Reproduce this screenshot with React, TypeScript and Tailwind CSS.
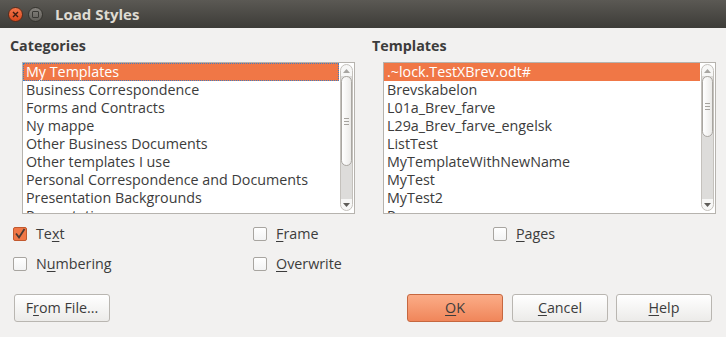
import React from 'react';

const categories = [
  'My Templates',
  'Business Correspondence',
  'Forms and Contracts',
  'Ny mappe',
  'Other Business Documents',
  'Other templates I use',
  'Personal Correspondence and Documents',
  'Presentation Backgrounds',
  'Presentations',
];

const templates = [
  '.~lock.TestXBrev.odt#',
  'Brevskabelon',
  'L01a_Brev_farve',
  'L29a_Brev_farve_engelsk',
  'ListTest',
  'MyTemplateWithNewName',
  'MyTest',
  'MyTest2',
  'Pages',
];

function ScrollBar({ thumb }: { thumb: string }) {
  return (
    <div className="absolute right-[1px] top-[1px] bottom-[2px] w-[13px] rounded-full border border-[#c4c1bc] bg-[#f7f7f6] flex flex-col items-center overflow-hidden">
      <div className="h-[11px] w-full flex items-center justify-center shrink-0">
        <svg width="7" height="4" viewBox="0 0 7 4">
          <path d="M0 4 L3.5 0 L7 4 Z" fill="#a8a6a2" />
        </svg>
      </div>
      <div className="flex-1 w-full flex flex-col bg-[#dddcda]">
        <div
          className={`${thumb} w-full rounded-full border border-[#a9a6a1] bg-gradient-to-r from-[#ffffff] to-[#ebeae8] flex flex-col items-center justify-center gap-[2px]`}
        >
          <div className="w-[5px] h-px bg-[#a5a29d]" />
          <div className="w-[5px] h-px bg-[#a5a29d]" />
          <div className="w-[5px] h-px bg-[#a5a29d]" />
        </div>
      </div>
      <div className="h-[11px] w-full flex items-center justify-center shrink-0">
        <svg width="7" height="4" viewBox="0 0 7 4">
          <path d="M0 0 L3.5 4 L7 0 Z" fill="#5f5d59" />
        </svg>
      </div>
    </div>
  );
}

function ListBox({ items, thumb, focus }: { items: string[]; thumb: string; focus?: boolean }) {
  return (
    <div className="relative h-[152px] w-[333px] border border-[#b6b3ae] bg-white overflow-hidden">
      <div className="pr-[15px]">
        {items.map((it, i) => (
          <div
            key={it}
            className={
              i === 0
                ? `h-[18px] leading-[18px] pl-[3px] bg-[#f07746] text-white ${focus ? 'outline-1 outline-dotted outline-[#3d7fc4] -outline-offset-1' : ''}`
                : 'h-[18px] leading-[18px] pl-[3px] text-[#3c3c3c]'
            }
          >
            {it}
          </div>
        ))}
      </div>
      <ScrollBar thumb={thumb} />
    </div>
  );
}

function Check({ checked, children }: { checked?: boolean; children: React.ReactNode }) {
  return (
    <div className="flex items-center h-[20px]">
      {checked ? (
        <div className="w-[14px] h-[14px] rounded-[2px] border border-[#c2592e] bg-[#f07746] flex items-center justify-center">
          <svg width="12" height="12" viewBox="0 0 12 12">
            <path d="M2 5.5 L5 9.5 L10.5 1" stroke="#4a3a33" strokeWidth="1.8" fill="none" />
          </svg>
        </div>
      ) : (
        <div className="w-[14px] h-[14px] rounded-[2px] border border-[#a8a5a0] bg-gradient-to-b from-white to-[#f3f3f3]" />
      )}
      <span className="ml-[9px] text-[#3c3c3c]">{children}</span>
    </div>
  );
}

function Btn({ primary, children, className = '' }: { primary?: boolean; children: React.ReactNode; className?: string }) {
  return (
    <div
      className={`h-[28px] w-[96px] rounded-[3px] border flex items-center justify-center ${
        primary
          ? 'border-[#c6673f] bg-gradient-to-b from-[#fbac87] to-[#f0865a] text-[#3c3c3c]'
          : 'border-[#b9b6b1] bg-gradient-to-b from-[#ffffff] to-[#ecebe9] text-[#3c3c3c]'
      } ${className}`}
    >
      {children}
    </div>
  );
}

const U = ({ children }: { children: React.ReactNode }) => (
  <span className="underline underline-offset-[2px] decoration-1">{children}</span>
);

export default function App() {
  return (
    <div className="w-[726px] h-[337px] bg-[#f2f1f0] flex flex-col text-[14.3px] font-['Open_Sans',sans-serif] overflow-hidden">
      <div className="h-[28px] shrink-0 bg-gradient-to-b from-[#5b5954] to-[#3d3c38] flex items-center pl-[8px]">
        <div className="w-[15px] h-[15px] rounded-full bg-gradient-to-b from-[#f4764a] to-[#d9471a] border border-[#5a2b1a] flex items-center justify-center">
          <svg width="7" height="7" viewBox="0 0 7 7">
            <path d="M1 1 L6 6 M6 1 L1 6" stroke="#3b1d12" strokeWidth="1.4" />
          </svg>
        </div>
        <div className="ml-[5px] w-[15px] h-[15px] rounded-full bg-gradient-to-b from-[#86837e] to-[#615f5a] border border-[#35342f] flex items-center justify-center">
          <div className="w-[7px] h-[7px] rounded-[1px] border-[1.5px] border-[#3a3935]" />
        </div>
        <div className="ml-[12px] text-[15px] font-bold text-[#dfdbd2]">Load Styles</div>
      </div>

      <div className="flex pl-[10px] pt-[8px]">
        <div className="w-[362px]">
          <div className="font-bold text-[#3c3c3c] leading-[20px]">Categories</div>
          <div className="mt-[6px] ml-[12px]">
            <ListBox items={categories} thumb="h-[90px]" focus />
          </div>
        </div>
        <div>
          <div className="font-bold text-[#3c3c3c] leading-[20px]">Templates</div>
          <div className="mt-[6px] ml-[11px]">
            <ListBox items={templates} thumb="h-[61px]" />
          </div>
        </div>
      </div>

      <div className="grid grid-cols-[240px_240px_240px] pl-[13px] mt-[10px] gap-y-[10px]">
        <Check checked>
          Te<U>x</U>t
        </Check>
        <Check>
          <U>F</U>rame
        </Check>
        <Check>
          <U>P</U>ages
        </Check>
        <Check>
          N<U>u</U>mbering
        </Check>
        <Check>
          <U>O</U>verwrite
        </Check>
      </div>

      <div className="flex items-center pl-[14px] pr-[14px] mt-[20px]">
        <Btn>
          F<U>r</U>om File...
        </Btn>
        <div className="flex-1" />
        <Btn primary>
          <U>O</U>K
        </Btn>
        <Btn className="ml-[9px]">
          <U>C</U>ancel
        </Btn>
        <Btn className="ml-[8px]">
          <U>H</U>elp
        </Btn>
      </div>
    </div>
  );
}
